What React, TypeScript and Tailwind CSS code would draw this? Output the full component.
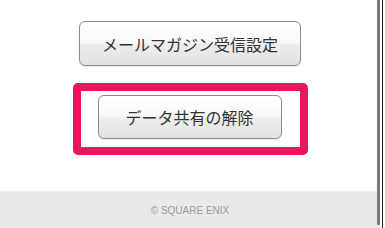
import React from "react";

const btn =
  "flex items-center justify-center rounded-[6px] border border-[#8c8c8c] bg-[linear-gradient(to_bottom,#ffffff_0%,#f8f8f8_48%,#ededed_52%,#e2e2e2_100%)] text-[16px] leading-none text-[#333333] shadow-[0_1px_1px_rgba(0,0,0,0.08)]";

export default function App() {
  return (
    <div
      className="relative w-[385px] h-[228px] overflow-hidden bg-white"
      style={{ fontFamily: '"Noto Sans CJK JP", "Noto Sans", sans-serif' }}
    >
      <div className="w-[380px] flex flex-col items-center pt-[21px]">
        <button className={`${btn} w-[222px] h-[45px]`}>メールマガジン受信設定</button>
        <div className="mt-[17px] w-[235px] h-[72px] rounded-[5px] border-[8px] border-[#e8175d] pl-[17px] pt-[4px]">
          <button className={`${btn} w-[184px] h-[44px]`}>データ共有の解除</button>
        </div>
      </div>
      <footer className="mt-[36px] w-[380px] h-[37px] bg-[#e9e9e9] border-t border-[#f0f0f0] flex items-center justify-center">
        <span
          className="text-[10px] text-[#9a9a9a]"
          style={{ fontFamily: '"Liberation Sans", Arial, sans-serif' }}
        >
          © SQUARE ENIX
        </span>
      </footer>
      <div className="absolute left-[377px] top-0 w-[3px] h-[225px] bg-[#7a7a7a] rounded-b-[1px]" />
      <div className="absolute left-[382px] top-0 w-[1px] h-[228px] bg-[#222222]" />
    </div>
  );
}
